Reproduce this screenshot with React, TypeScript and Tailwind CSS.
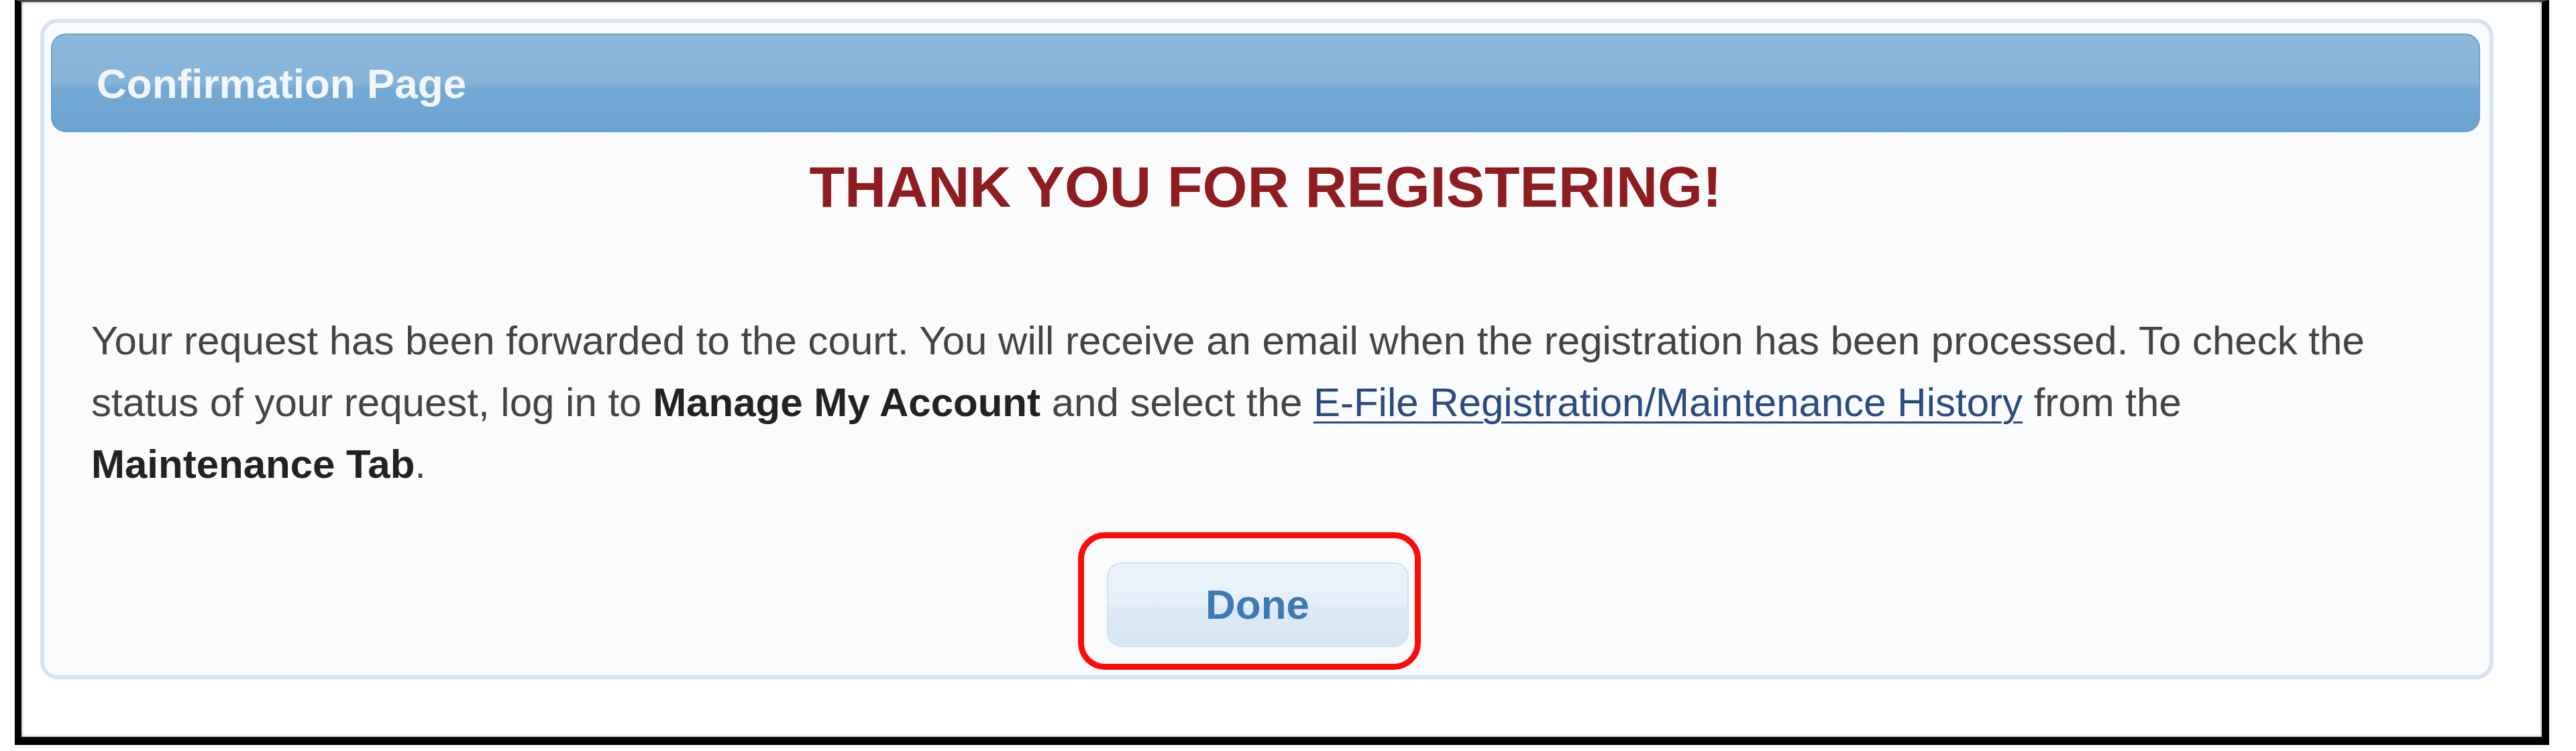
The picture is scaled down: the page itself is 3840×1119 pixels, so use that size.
export default function App() {
  return (
    <div className="w-[3840px] h-[1119px] bg-white font-['Liberation_Sans',Arial,sans-serif]">
      {/* framed screenshot */}
      <div className="ml-[22px] w-[3778px] h-[1110px] border-l-[10px] border-r-[11px] border-b-[12px] border-t-[3px] border-black border-t-[#4a4a4a] bg-white shadow-[inset_0_0_5px_rgba(0,0,0,0.35)] overflow-hidden">
        <div className="ml-[28px] mt-[25px] w-[3657px] h-[984px] rounded-[26px] border-[6px] border-[#d6e4f2] bg-[#fafbfc] pl-[10px] pr-[14px] pt-[16px] pb-[42px]">
          {/* panel header */}
          <div className="h-[147px] rounded-[22px] border-2 border-[#68a1d2] bg-[linear-gradient(to_bottom,#8bb8db_0%,#86b4d9_50%,#72a9d3_56%,#6ba3d0_100%)] flex items-center pl-[66px] pt-[2px]">
            <h1 className="text-[62px] font-bold text-[#f1f6fb] leading-none">Confirmation Page</h1>
          </div>

          <h2 className="mt-[38px] text-center text-[86px] leading-none font-bold text-[#8f1c20]">
            THANK YOU FOR REGISTERING!
          </h2>

          <p className="mt-[141px] pl-[60px] pr-[110px] text-[60px] leading-[92px] text-[#444444]">
            Your request has been forwarded to the court. You will receive an email when the registration has been
            processed. To check the status of your request, log in to{' '}
            <span className="font-bold text-[#222222]">Manage My Account</span> and select the{' '}
            <a href="#" className="text-[#2b4a7e] underline decoration-[3px] underline-offset-[8px]">
              E-File Registration/Maintenance History
            </a>{' '}
            from the <span className="font-bold text-[#222222]">Maintenance Tab</span>.
          </p>

          <div className="mt-[100px] flex justify-center pr-[24px]">
            <div className="relative">
              <button className="w-[450px] h-[126px] rounded-[22px] border-2 border-[#d2e2f1] bg-[linear-gradient(to_bottom,#ebf4fc_0%,#e6f0fa_50%,#dde9f6_54%,#d9e7f5_100%)] text-[62px] font-bold text-[#3d7ab3] leading-none">
                Done
              </button>
              {/* highlight ring around the button */}
              <div className="absolute -left-[43px] -top-[45px] -right-[18px] -bottom-[34px] rounded-[40px] border-[9px] border-[#ff0a0a] pointer-events-none" />
            </div>
          </div>
        </div>
      </div>
    </div>
  )
}
